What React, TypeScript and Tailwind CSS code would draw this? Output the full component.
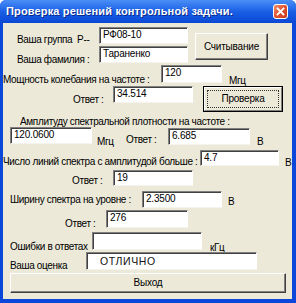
import React from 'react';

const font = { fontFamily: '"Liberation Sans", Arial, sans-serif' };

function Field({ className = '', value = '', textClass = '' }: { className?: string; value?: string; textClass?: string }) {
  return (
    <div
      className={`shrink-0 overflow-hidden border-t border-l border-[#808080] border-r border-b border-r-white border-b-[#f4f3ee] bg-white pl-[3px] pt-[1px] text-[10px] leading-[12px] tracking-[-0.2px] text-black shadow-[inset_1px_1px_0_#404040] ${className}`}
    >
      <span className={textClass}>{value}</span>
    </div>
  );
}

function Label({ className = '', children }: { className?: string; children: React.ReactNode }) {
  return (
    <div className={`shrink-0 whitespace-nowrap text-[10px] leading-[12px] tracking-[-0.35px] text-black ${className}`}>
      {children}
    </div>
  );
}

function Button({ className = '', children, main = false }: { className?: string; children: React.ReactNode; main?: boolean }) {
  if (main) {
    return (
      <div className={`shrink-0 border border-black ${className}`}>
        <div className="flex h-full items-center justify-center border-t border-l border-white border-r border-b border-r-[#808080] border-b-[#808080] bg-[#ece9d8] p-[2px]">
          <div className="flex h-full w-full items-center justify-center border border-dotted border-[#333] text-[10px] leading-[12px] tracking-[-0.2px] text-black">
            {children}
          </div>
        </div>
      </div>
    );
  }
  return (
    <div
      className={`flex shrink-0 items-center justify-center border-t border-l border-white border-r border-b border-r-[#404040] border-b-[#404040] bg-[#ece9d8] text-[10px] leading-[12px] tracking-[-0.2px] text-black shadow-[inset_-1px_-1px_0_#808080] ${className}`}
    >
      {children}
    </div>
  );
}

export default function App() {
  return (
    <div style={font} className="h-[303px] w-[296px] overflow-hidden bg-white">
      <div className="flex h-[303px] w-[296px] flex-col rounded-t-[6px] bg-[#0b47d8]">
        {/* title bar */}
        <div className="flex h-[23px] shrink-0 items-center rounded-t-[6px] bg-gradient-to-b from-[#4a8ef6] via-[#1a5fe6] to-[#0a48d4] pl-[6px] pr-[8px]">
          <div className="flex-1 whitespace-nowrap text-[11px] font-bold tracking-[0.15px] text-white [text-shadow:1px_1px_0_#0a2a8a]">
            Проверка решений контрольной задачи.
          </div>
          <div className="flex h-[15px] w-[15px] items-center justify-center rounded-[3px] border border-white bg-gradient-to-br from-[#f08b6a] via-[#e0522f] to-[#c83c1c]">
            <svg width="9" height="9" viewBox="0 0 9 9">
              <path d="M1.5 1.5 L7.5 7.5 M7.5 1.5 L1.5 7.5" stroke="white" strokeWidth="1.8" strokeLinecap="square" />
            </svg>
          </div>
        </div>

        {/* body */}
        <div className="mx-[3px] mr-[4px] flex h-[276px] flex-col bg-[#ece9d8]">
          {/* group / surname */}
          <div className="flex h-[41px] shrink-0 items-start">
            <div className="ml-[14px] w-[82px] shrink-0">
              <Label className="mt-[11px]">Ваша группа&nbsp;&nbsp;Р--</Label>
              <Label className="mt-[8px]">Ваша фамилия :</Label>
            </div>
            <div className="shrink-0">
              <Field className="mt-[4px] h-[17px] w-[89px]" value="РФ08-10" />
              <Field className="mt-[2px] h-[17px] w-[89px]" value="Тараненко" />
            </div>
            <Button className="ml-[7px] mt-[10px] h-[27px] w-[73px]">Считывание</Button>
          </div>

          {/* power */}
          <div className="flex h-[21px] shrink-0 items-start">
            <Label className="mt-[10px] w-[158px]">Мощность колебания на частоте :</Label>
            <Field className="mt-[1px] h-[18px] w-[61px]" value="120" />
            <Label className="ml-[7px] mt-[11px]">Мгц</Label>
          </div>

          <div className="flex h-[28px] shrink-0 items-start">
            <Label className="ml-[70px] mt-[9px] w-[40px]">Ответ :</Label>
            <Field className="mt-[1px] h-[17px] w-[80px]" value="34.514" />
            <Button main className="ml-[10px] mt-[1px] h-[26px] w-[80px]">Проверка</Button>
          </div>

          {/* spectral density */}
          <div className="flex h-[14px] shrink-0 items-start">
            <Label className="ml-[17px] mt-[3px]">Амплитуду спектральной плотности на частоте :</Label>
          </div>

          <div className="flex h-[22px] shrink-0 items-start">
            <Field className="ml-[7px] mt-[0px] h-[17px] w-[82px]" value="120.0600" />
            <Label className="ml-[5px] mt-[9px] w-[29px]">Мгц</Label>
            <Label className="mt-[7px] w-[42px]">Ответ :</Label>
            <Field className="mt-[1px] h-[17px] w-[82px]" value="6.685" />
            <Label className="ml-[7px] mt-[9px]">В</Label>
          </div>

          {/* lines count */}
          <div className="flex h-[20px] shrink-0 items-start">
            <Label className="mt-[7px] w-[197px]">Число линий спектра с амплитудой больше :</Label>
            <Field className="mt-[1px] h-[16px] w-[79px]" value="4.7" />
            <Label className="ml-[6px] mt-[8px]">В</Label>
          </div>

          <div className="flex h-[21px] shrink-0 items-start">
            <Label className="ml-[69px] mt-[6px] w-[41px]">Ответ :</Label>
            <Field className="mt-[1px] h-[16px] w-[80px]" value="19" />
          </div>

          {/* width */}
          <div className="flex h-[19px] shrink-0 items-start">
            <Label className="ml-[7px] mt-[4px] w-[132px]">Ширину спектра на уровне :</Label>
            <Field className="mt-[1px] h-[17px] w-[80px]" value="2.3500" />
            <Label className="ml-[6px] mt-[6px]">В</Label>
          </div>

          <div className="flex h-[22px] shrink-0 items-start">
            <Label className="ml-[62px] mt-[9px] w-[41px]">Ответ :</Label>
            <Field className="mt-[1px] h-[18px] w-[82px]" value="276" />
          </div>

          {/* errors */}
          <div className="flex h-[20px] shrink-0 items-start">
            <Label className="ml-[7px] mt-[10px] w-[82px]">Ошибки в ответах</Label>
            <Field className="mt-[1px] h-[18px] w-[110px]" />
            <Label className="ml-[8px] mt-[11px]">кГц</Label>
          </div>

          {/* mark */}
          <div className="flex h-[21px] shrink-0 items-start">
            <Label className="ml-[7px] mt-[9px] w-[76px]">Ваша оценка</Label>
            <Field
              className="mt-[1px] h-[18px] w-[171px] pl-[13px] pt-[2px]"
              value="ОТЛИЧНО"
              textClass="text-[10.5px] tracking-[0.6px] text-[#111]"
            />
          </div>

          <div className="flex h-[22px] shrink-0 items-start">
            <Button className="ml-[7px] mt-[1px] h-[20px] w-[276px]">Выход</Button>
          </div>
        </div>
      </div>
    </div>
  );
}
